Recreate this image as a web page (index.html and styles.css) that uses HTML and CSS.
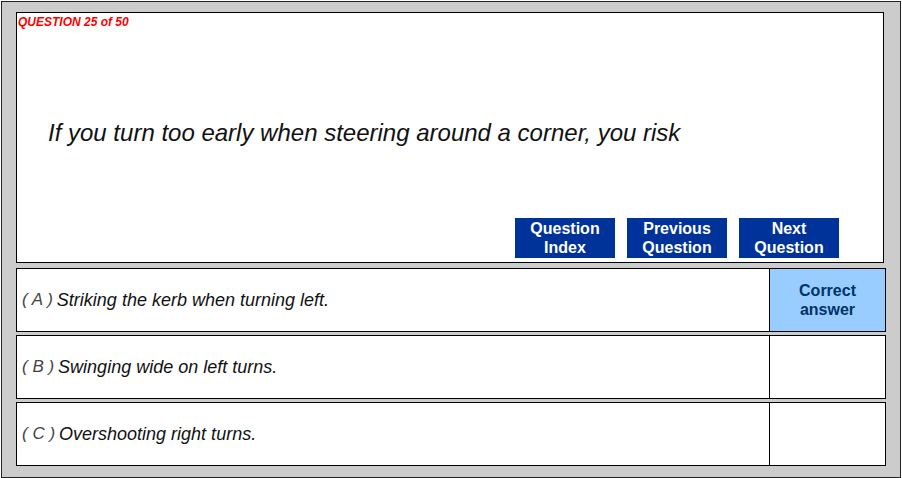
FILE: index.html
```html
<!DOCTYPE html>
<html>
<head>
  <link rel="stylesheet" href="styles.css">
</head>
<body>
  <div class="frame">
    <div class="question-box">
      <div class="counter">QUESTION 25 of 50</div>
      <div class="question-text">If you turn too early when steering around a corner, you risk</div>
      <div class="nav-buttons">
        <button class="nav-btn">Question<br>Index</button>
        <button class="nav-btn">Previous<br>Question</button>
        <button class="nav-btn">Next<br>Question</button>
      </div>
    </div>

    <div class="answers">
      <div class="answer-row">
        <div class="answer-text"><span class="letter">( A )</span> Striking the kerb when turning left.</div>
        <div class="answer-mark correct">Correct<br>answer</div>
      </div>
      <div class="answer-row">
        <div class="answer-text"><span class="letter">( B )</span> Swinging wide on left turns.</div>
        <div class="answer-mark"></div>
      </div>
      <div class="answer-row">
        <div class="answer-text"><span class="letter">( C )</span> Overshooting right turns.</div>
        <div class="answer-mark"></div>
      </div>
    </div>
  </div>
</body>
</html>
```

FILE: styles.css
```css
body {
  margin: 0;
  background: #fff;
  font-family: "Liberation Sans", Arial, sans-serif;
}

.frame {
  box-sizing: border-box;
  width: 900px;
  height: 477px;
  margin: 1px 0 0 1px;
  border: 1px solid #222;
  background: #cccccc;
  padding: 10px 0 0 14px;
  display: flex;
  flex-direction: column;
  gap: 5px;
}

.question-box {
  box-sizing: border-box;
  width: 868px;
  height: 251px;
  border: 1px solid #000;
  background: #fff;
  display: flex;
  flex-direction: column;
}

.counter {
  color: #ff0000;
  font-size: 12px;
  font-weight: bold;
  font-style: italic;
  padding: 2px 0 0 1px;
  line-height: 14px;
}

.question-text {
  font-size: 24px;
  font-style: italic;
  color: #111;
  padding: 90px 0 0 31px;
  line-height: 28px;
}

.nav-buttons {
  margin-top: auto;
  display: flex;
  justify-content: flex-end;
  gap: 12px;
  padding: 0 44px 4px 0;
}

.nav-btn {
  width: 100px;
  height: 40px;
  border: none;
  background: #003399;
  color: #fff;
  font-family: inherit;
  font-size: 16px;
  font-weight: bold;
  line-height: 19px;
  padding: 0;
}

.answers {
  display: flex;
  flex-direction: column;
  gap: 3px;
}

.answer-row {
  box-sizing: border-box;
  width: 870px;
  height: 64px;
  border: 1px solid #000;
  background: #fff;
  display: flex;
}

.answer-text {
  flex: 1;
  display: flex;
  align-items: center;
  gap: 4px;
  padding-left: 5px;
  font-size: 18px;
  font-style: italic;
  color: #111;
  border-right: 1px solid #000;
}

.letter {
  color: #444;
  font-size: 17px;
  font-weight: 300;
}

.answer-mark {
  width: 115px;
  display: flex;
  align-items: center;
  justify-content: center;
  text-align: center;
}

.answer-mark.correct {
  background: #99ccff;
  color: #003366;
  font-size: 16px;
  font-weight: bold;
  line-height: 19px;
}
```
